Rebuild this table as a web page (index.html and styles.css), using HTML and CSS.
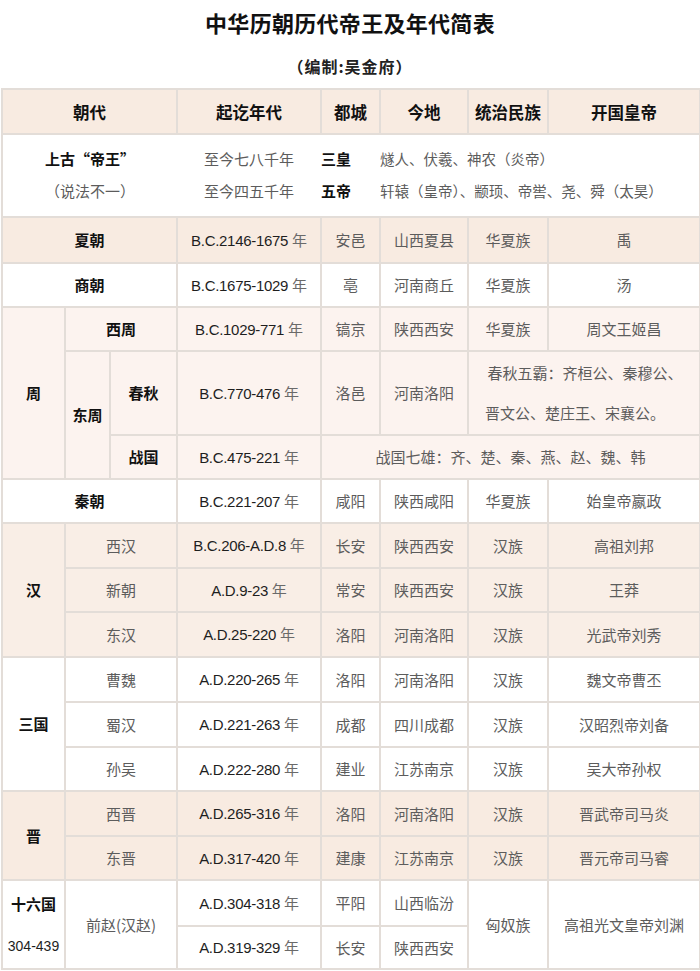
FILE: index.html
```html
<!DOCTYPE html>
<html lang="zh">
<head>
<meta charset="utf-8">
<title>中华历朝历代帝王及年代简表</title>
<link rel="stylesheet" href="styles.css">
</head>
<body>
<h1 class="title">中华历朝历代帝王及年代简表</h1>
<p class="subtitle">（编制:吴金府）</p>
<table class="chrono">
  <colgroup>
    <col class="c1"><col class="c2"><col class="c3"><col class="c4"><col class="c5"><col class="c6"><col class="c7"><col class="c8">
  </colgroup>
  <thead>
    <tr class="head"><th colspan="3">朝代</th><th>起讫年代</th><th>都城</th><th>今地</th><th>统治民族</th><th>开国皇帝</th></tr>
  </thead>
  <tbody>
    <tr class="ancient a1"><td colspan="3" class="b">上古“帝王”</td><td class="s">至今七八千年</td><td class="b left">三皇</td><td colspan="3" class="s left">燧人、伏羲、神农（炎帝）</td></tr>
    <tr class="ancient a2"><td colspan="3" class="s">（说法不一）</td><td class="s">至今四五千年</td><td class="b left">五帝</td><td colspan="3" class="s left">轩辕（皇帝）、颛顼、帝喾、尧、舜（太昊）</td></tr>

    <tr class="beige h46"><td colspan="3" class="b">夏朝</td><td class="d">B.C.2146-1675 <span class="n">年</span></td><td class="s">安邑</td><td class="s">山西夏县</td><td class="s">华夏族</td><td class="s">禹</td></tr>
    <tr class="h44"><td colspan="3" class="b">商朝</td><td class="d">B.C.1675-1029 <span class="n">年</span></td><td class="s">亳</td><td class="s">河南商丘</td><td class="s">华夏族</td><td class="s">汤</td></tr>

    <tr class="pink h44"><td rowspan="3" class="b">周</td><td colspan="2" class="b">西周</td><td class="d">B.C.1029-771 <span class="n">年</span></td><td class="s">镐京</td><td class="s">陕西西安</td><td class="s">华夏族</td><td class="s">周文王姬昌</td></tr>
    <tr class="pink h84"><td rowspan="2" class="b">东周</td><td class="b">春秋</td><td class="d">B.C.770-476 <span class="n">年</span></td><td class="s">洛邑</td><td class="s">河南洛阳</td><td colspan="2" class="s ba"><div class="ba1">春秋五霸：齐桓公、秦穆公、</div><div class="ba2">晋文公、楚庄王、宋襄公。</div></td></tr>
    <tr class="pink h44"><td class="b">战国</td><td class="d">B.C.475-221 <span class="n">年</span></td><td colspan="4" class="s">战国七雄：齐、楚、秦、燕、赵、魏、韩</td></tr>

    <tr class="h44"><td colspan="3" class="b">秦朝</td><td class="d">B.C.221-207 <span class="n">年</span></td><td class="s">咸阳</td><td class="s">陕西咸阳</td><td class="s">华夏族</td><td class="s">始皇帝嬴政</td></tr>

    <tr class="beige2 h45"><td rowspan="3" class="b">汉</td><td colspan="2" class="s">西汉</td><td class="d">B.C.206-A.D.8 <span class="n">年</span></td><td class="s">长安</td><td class="s">陕西西安</td><td class="s">汉族</td><td class="s">高祖刘邦</td></tr>
    <tr class="beige2 h44"><td colspan="2" class="s">新朝</td><td class="d">A.D.9-23 <span class="n">年</span></td><td class="s">常安</td><td class="s">陕西西安</td><td class="s">汉族</td><td class="s">王莽</td></tr>
    <tr class="beige2 h45"><td colspan="2" class="s">东汉</td><td class="d">A.D.25-220 <span class="n">年</span></td><td class="s">洛阳</td><td class="s">河南洛阳</td><td class="s">汉族</td><td class="s">光武帝刘秀</td></tr>

    <tr class="h45"><td rowspan="3" class="b">三国</td><td colspan="2" class="s">曹魏</td><td class="d">A.D.220-265 <span class="n">年</span></td><td class="s">洛阳</td><td class="s">河南洛阳</td><td class="s">汉族</td><td class="s">魏文帝曹丕</td></tr>
    <tr class="h45"><td colspan="2" class="s">蜀汉</td><td class="d">A.D.221-263 <span class="n">年</span></td><td class="s">成都</td><td class="s">四川成都</td><td class="s">汉族</td><td class="s">汉昭烈帝刘备</td></tr>
    <tr class="h44"><td colspan="2" class="s">孙吴</td><td class="d">A.D.222-280 <span class="n">年</span></td><td class="s">建业</td><td class="s">江苏南京</td><td class="s">汉族</td><td class="s">吴大帝孙权</td></tr>

    <tr class="beige h45"><td rowspan="2" class="b">晋</td><td colspan="2" class="s">西晋</td><td class="d">A.D.265-316 <span class="n">年</span></td><td class="s">洛阳</td><td class="s">河南洛阳</td><td class="s">汉族</td><td class="s">晋武帝司马炎</td></tr>
    <tr class="beige h44"><td colspan="2" class="s">东晋</td><td class="d">A.D.317-420 <span class="n">年</span></td><td class="s">建康</td><td class="s">江苏南京</td><td class="s">汉族</td><td class="s">晋元帝司马睿</td></tr>

    <tr class="h46"><td rowspan="2" class="b sixteen"><div class="six1">十六国</div><div class="six2">304-439</div></td><td rowspan="2" colspan="2" class="s">前赵(汉赵)</td><td class="d">A.D.304-318 <span class="n">年</span></td><td class="s">平阳</td><td class="s">山西临汾</td><td rowspan="2" class="s">匈奴族</td><td rowspan="2" class="s">高祖光文皇帝刘渊</td></tr>
    <tr class="h43"><td class="d">A.D.319-329 <span class="n">年</span></td><td class="s">长安</td><td class="s">陕西西安</td></tr>
  </tbody>
</table>
</body>
</html>
```

FILE: styles.css
```css
body {
  margin: 0;
  background: #ffffff;
  font-family: "Noto Sans CJK SC", "Noto Sans", sans-serif;
  color: #111;
}

.title {
  margin: 0;
  padding-top: 7px;
  font-size: 22px;
  line-height: 30px;
  font-weight: 700;
  text-align: center;
  letter-spacing: 0.3px;
  color: #111;
}

.subtitle {
  margin: 18px 0 11px;
  font-size: 16px;
  line-height: 22px;
  font-weight: 700;
  text-align: center;
  letter-spacing: 1px;
  color: #222;
}

.chrono {
  border-collapse: collapse;
  table-layout: fixed;
  width: 698px;
  margin-left: 1px;
}

.c1 { width: 63px; }
.c2 { width: 45px; }
.c3 { width: 67px; }
.c4 { width: 144px; }
.c5 { width: 59px; }
.c6 { width: 88px; }
.c7 { width: 80px; }
.c8 { width: 152px; }

.chrono th,
.chrono td {
  box-sizing: border-box;
  border: 2px solid #e3ddd8;
  padding: 0;
  text-align: center;
  vertical-align: middle;
  white-space: nowrap;
  font-size: 15px;
  line-height: 20px;
}

.head th {
  height: 45px;
  background: #f8ebe1;
  font-size: 16.5px;
  font-weight: 700;
  color: #111;
}

.ancient td {
  border-left: none;
  border-right: none;
  background: #fff;
}
.a1 td { border-bottom: none; height: 41px; padding-top: 7px; }
.a2 td { border-top: none; height: 42px; padding-bottom: 10px; }
.ancient td:first-child { border-left: 2px solid #e3ddd8; }
.ancient td:last-child { border-right: 2px solid #e3ddd8; }
.ancient .left { text-align: left; font-size: 14.5px; }
.ancient td.b.left { font-size: 15px; }

.b {
  font-weight: 700;
  color: #111;
}

.s {
  font-weight: 400;
  color: #5c5c5c;
}

.d {
  font-family: "Liberation Sans", Arial, sans-serif;
  color: #1e1e1e;
  font-size: 15.5px;
  letter-spacing: -0.3px;
}

.n {
  font-family: "Noto Sans CJK SC", sans-serif;
  color: #6a6a6a;
  font-size: 15px;
  letter-spacing: 0;
}

.beige td { background: #f8ebe1; }
.beige2 td { background: #f9eee6; }
.pink td { background: #fcf3ef; }

.h43 td { height: 43px; }
.h44 td { height: 44px; }
.h45 td { height: 45px; }
.h46 td { height: 46px; }
.h84 td { height: 84px; }

.ba {
  text-align: left;
}
.ba1 {
  line-height: 40px;
  padding-left: 2px;
}
.ba2 {
  line-height: 40px;
  text-align: right;
  padding-right: 34px;
}

.sixteen .six1,
.sixteen .six2 {
  line-height: 43px;
}
.sixteen .six2 {
  font-family: "Liberation Sans", Arial, sans-serif;
  font-weight: 400;
  font-size: 14px;
  color: #1e1e1e;
}
```
